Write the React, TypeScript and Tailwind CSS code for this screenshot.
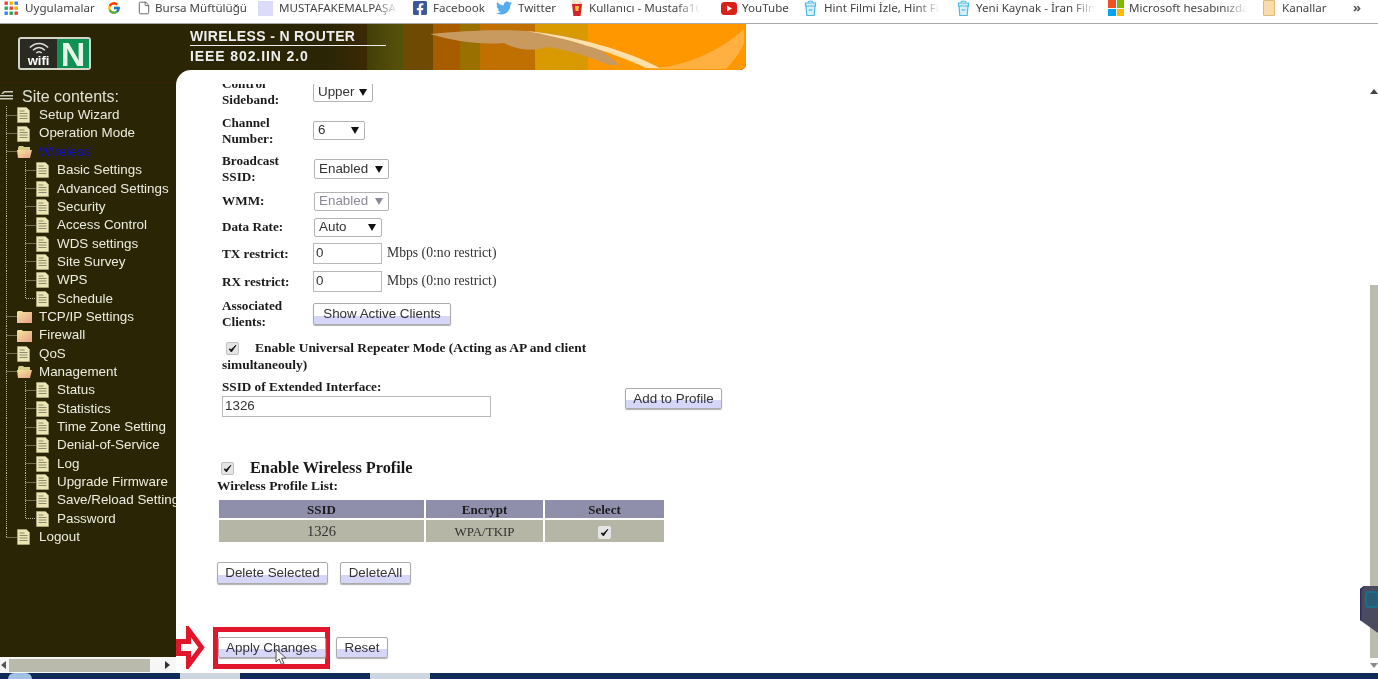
import type { ReactNode } from 'react';
import { FaFacebookSquare, FaTwitter } from 'react-icons/fa';
import { FcGoogle } from 'react-icons/fc';
import { File } from 'lucide-react';

const serif = 'font-["Liberation_Serif",serif]';
const sans = 'font-["Liberation_Sans",sans-serif]';

type Kind = 'page' | 'folder' | 'open';

const tree: { label: string; kind: Kind; level: 0 | 1; last?: boolean; link?: boolean; end?: boolean }[] = [
  { label: 'Setup Wizard', kind: 'page', level: 0 },
  { label: 'Operation Mode', kind: 'page', level: 0 },
  { label: 'Wireless', kind: 'open', level: 0, link: true },
  { label: 'Basic Settings', kind: 'page', level: 1 },
  { label: 'Advanced Settings', kind: 'page', level: 1 },
  { label: 'Security', kind: 'page', level: 1 },
  { label: 'Access Control', kind: 'page', level: 1 },
  { label: 'WDS settings', kind: 'page', level: 1 },
  { label: 'Site Survey', kind: 'page', level: 1 },
  { label: 'WPS', kind: 'page', level: 1 },
  { label: 'Schedule', kind: 'page', level: 1, last: true },
  { label: 'TCP/IP Settings', kind: 'folder', level: 0 },
  { label: 'Firewall', kind: 'folder', level: 0 },
  { label: 'QoS', kind: 'page', level: 0 },
  { label: 'Management', kind: 'open', level: 0 },
  { label: 'Status', kind: 'page', level: 1 },
  { label: 'Statistics', kind: 'page', level: 1 },
  { label: 'Time Zone Setting', kind: 'page', level: 1 },
  { label: 'Denial-of-Service', kind: 'page', level: 1 },
  { label: 'Log', kind: 'page', level: 1 },
  { label: 'Upgrade Firmware', kind: 'page', level: 1 },
  { label: 'Save/Reload Settings', kind: 'page', level: 1 },
  { label: 'Password', kind: 'page', level: 1, last: true },
  { label: 'Logout', kind: 'page', level: 0, end: true },
];

function AppsIcon() {
  const colors = ['#e8453c', '#f4b400', '#3b82f6', '#34a853', '#e8453c', '#f4b400', '#3b82f6', '#34a853', '#e8453c'];
  return (
    <svg width="14" height="14" viewBox="0 0 14 14">
      {colors.map((c, i) => (
        <rect key={i} x={(i % 3) * 5 + 0.5} y={Math.floor(i / 3) * 5 + 0.5} width="3.4" height="3.4" fill={c} />
      ))}
    </svg>
  );
}

function PopcornIcon() {
  return (
    <svg width="14" height="18" viewBox="0 0 14 18">
      <circle cx="4" cy="3.5" r="2.4" fill="#efe3c8" />
      <circle cx="8" cy="2.8" r="2.4" fill="#f3ead6" />
      <circle cx="10.5" cy="5" r="2" fill="#e6d6b4" />
      <path d="M2 5h10l-1.4 12H3.4z" fill="#d5232c" />
      <path d="M5 7h4l-.6 5H5.6z" fill="#f4c430" />
    </svg>
  );
}

function CupIcon() {
  return (
    <svg width="13" height="18" viewBox="0 0 13 18" fill="none" stroke="#4cb8e8" strokeWidth="1.2">
      <path d="M4 3.5C4 1.5 9 1.5 9 3.5" />
      <path d="M1.5 4h10v3h-10zM2 7l.8 9.5h7.4L11 7" fill="#d8f0fb" />
      <path d="M4.5 11h4" />
    </svg>
  );
}

function YoutubeIcon() {
  return (
    <svg width="16" height="13" viewBox="0 0 16 13">
      <rect width="16" height="13" rx="3.5" fill="#d9211a" />
      <path d="M6 3.5v6l5-3z" fill="#ffffff" />
    </svg>
  );
}

function MicrosoftIcon() {
  return (
    <div className="grid h-[16px] w-[16px] grid-cols-2 gap-px">
      <span className="bg-[#f25022]" />
      <span className="bg-[#7fba00]" />
      <span className="bg-[#00a4ef]" />
      <span className="bg-[#ffb900]" />
    </div>
  );
}

function Bookmark({ icon, label, className, fade, gap }: {
  icon: ReactNode; label: string; className: string; fade?: boolean; gap: string;
}) {
  return (
    <div className={`flex shrink-0 items-center ${className}`}>
      <span className="flex shrink-0 items-center justify-center">{icon}</span>
      <span className={`relative min-w-0 flex-1 whitespace-nowrap ${fade ? 'overflow-hidden' : ''} ${gap}`}>
        {label}
        {fade && <span className="absolute inset-y-0 right-0 w-[24px] bg-linear-to-r from-transparent to-white" />}
      </span>
    </div>
  );
}

function BookmarksBar() {
  return (
    <div className='flex h-[24px] shrink-0 items-center border-b border-[#aaaaaa] bg-white pb-[7px] font-["Noto_Sans",sans-serif] text-[11.6px] text-[#444444]'>
      <Bookmark className="ml-[4px] w-[88px]" gap="ml-[7px]" icon={<AppsIcon />} label="Uygulamalar" />
      <div className="ml-[15px] flex w-[14px] shrink-0 items-center"><FcGoogle size={14} /></div>
      <Bookmark className="ml-[16px] w-[108px]" gap="ml-[4px]" icon={<File size={14} strokeWidth={1.5} color="#555" />} label="Bursa Müftülüğü" />
      <Bookmark className="ml-[13px] w-[140px]" gap="ml-[6px]" fade icon={<span className="block h-[15px] w-[15px] bg-[#dcdcfa]" />} label="MUSTAFAKEMALPAŞA" />
      <Bookmark className="ml-[14px] w-[71px]" gap="ml-[5px]" icon={<FaFacebookSquare size={16} color="#3b5998" />} label="Facebook" />
      <Bookmark className="ml-[13px] w-[58px]" gap="ml-[6px]" icon={<FaTwitter size={16} color="#55acee" />} label="Twitter" />
      <Bookmark className="ml-[16px] w-[130px]" gap="ml-[5px]" fade icon={<PopcornIcon />} label="Kullanıcı - Mustafa16 - " />
      <Bookmark className="ml-[21px] w-[69px]" gap="ml-[5px]" icon={<YoutubeIcon />} label="YouTube" />
      <Bookmark className="ml-[14px] w-[136px]" gap="ml-[7px]" fade icon={<CupIcon />} label="Hint Filmi İzle, Hint Film" />
      <Bookmark className="ml-[17px] w-[138px]" gap="ml-[6px]" fade icon={<CupIcon />} label="Yeni Kaynak - İran Film" />
      <Bookmark className="ml-[13px] w-[139px]" gap="ml-[5px]" fade icon={<MicrosoftIcon />} label="Microsoft hesabınızda" />
      <Bookmark className="ml-[16px] w-[64px]" gap="ml-[7px]" icon={<span className="block h-[16px] w-[12px] rounded-[1px] border border-[#e0b878] bg-[#fbdca8]" />} label="Kanallar" />
      <span className="ml-[26px] text-[13px] font-bold text-[#555555]">»</span>
    </div>
  );
}

function WifiLogo() {
  return (
    <div className="ml-[18px] flex h-[33px] w-[73px] overflow-hidden rounded-[3px] border-2 border-[#d4d4c8] bg-[#2b2a22]">
      <div className="flex w-[37px] flex-col items-center justify-end pb-[1px]">
        <svg width="22" height="13" viewBox="0 0 24 14" fill="none" stroke="#dddddd" strokeWidth="1.6">
          <path d="M2 6c6-6 14-6 20 0M5.5 9c4-4 9-4 13 0M9 12c2-2 4-2 6 0" />
        </svg>
        <span className={`${sans} text-[13px] leading-[12px] font-bold text-white`}>wifi</span>
      </div>
      <div className={`${sans} flex flex-1 items-center justify-center bg-[#0c9253] text-[34px] leading-none font-bold text-[#e8f2e6]`}>N</div>
    </div>
  );
}

function PageIcon() {
  return (
    <svg width="13" height="16" viewBox="0 0 13 16" className="shrink-0">
      <path d="M.5.5h9l3 3v12H.5z" fill="#ece5b4" stroke="#b8b48c" strokeWidth=".6" />
      <path d="M2.5 4h5M2.5 6.5h8M2.5 9h8M2.5 11.5h8" stroke="#8c8a70" strokeWidth="1" />
    </svg>
  );
}

function FolderIcon({ open }: { open: boolean }) {
  return (
    <svg width="15" height="13" viewBox="0 0 15 13" className="-mr-[2px] shrink-0">
      <defs>
        <linearGradient id="folder-fill" x1="0" y1="0" x2="1" y2="1">
          <stop offset="0" stopColor="#f6e79a" />
          <stop offset="1" stopColor="#e8a08c" />
        </linearGradient>
      </defs>
      {open ? (
        <>
          <path d="M1 3l1-2h4l1 1h6v3H1z" fill="#d8cf88" />
          <path d="M0 5h15l-2 8H1z" fill="url(#folder-fill)" />
        </>
      ) : (
        <path d="M0 2l1-1h4l1 1h9v11H0z" fill="url(#folder-fill)" />
      )}
    </svg>
  );
}

function TreeGuide({ level, last, end }: { level: 0 | 1; last?: boolean; end?: boolean }) {
  const w = level === 0 ? 17 : 36;
  return (
    <svg width={w} height="19" className="shrink-0" fill="none" stroke="#b9b9a2" strokeDasharray="1 1">
      <path d={end ? 'M6.5 0v9.5' : 'M6.5 0v19'} />
      {level === 0 && <path d="M6.5 9.5H17" />}
      {level === 1 && <path d={last ? 'M25.5 0v9.5H36' : 'M25.5 0v19M25.5 9.5H36'} />}
    </svg>
  );
}

function Sidebar() {
  return (
    <aside className={`${sans} flex w-[176px] shrink-0 flex-col overflow-hidden text-[13.4px] text-[#ecece0]`}>
      <div className="h-[59px] shrink-0 border-b border-[#3a2108] pt-[13px]">
        <WifiLogo />
      </div>
      <div className="flex h-[23px] shrink-0 items-end text-[16px] leading-[18px] text-[#e0e0d4]">
        <svg width="14" height="10" viewBox="0 0 14 10" className="mb-[5px]" fill="#cfcfc4">
          <path d="M1 3L4 0h9v1.6H4.6L3 3zM0 4h13v1.6H0zM0 7h13v1.6H0z" />
        </svg>
        <span className="ml-[8px]">Site contents:</span>
      </div>
      <div className="min-h-0 flex-1">
        {tree.map(t => (
          <div key={t.label} className="flex h-[18.35px] items-center whitespace-nowrap">
            <TreeGuide level={t.level} last={t.last} end={t.end} />
            {t.kind === 'page' ? <PageIcon /> : <FolderIcon open={t.kind === 'open'} />}
            <span className={`${t.level === 0 ? 'ml-[9px]' : 'ml-[8px]'} ${t.link ? 'text-[#1010c8]' : ''}`}>{t.label}</span>
          </div>
        ))}
      </div>
      <div className="flex h-[16px] shrink-0 items-center bg-[#f6f6f4]">
        <span className="ml-[1px] h-0 w-0 border-y-[4px] border-r-[5px] border-y-transparent border-r-[#555555]" />
        <div className="ml-[3px] h-[13px] w-[141px] bg-[#b9b9ac]" />
        <span className="ml-[15px] h-0 w-0 border-y-[4px] border-l-[5px] border-y-transparent border-l-[#333333]" />
      </div>
    </aside>
  );
}

function Banner() {
  return (
    <div className={`${sans} relative h-[46px] w-[570px] shrink-0 overflow-hidden rounded-br-[6px] bg-[#2a2605]`}>
      <svg width="570" height="46" viewBox="0 0 570 46" className="absolute inset-0">
        <defs>
          <linearGradient id="banner-shade" x1="0" y1="0" x2="1" y2="0">
            <stop offset="0" stopColor="#2a2605" />
            <stop offset="1" stopColor="#2a2605" stopOpacity="0" />
          </linearGradient>
        </defs>
        <rect x="151" width="40" height="46" fill="#4a2c05" />
        <rect x="191" width="36" height="46" fill="#55500a" />
        <rect x="227" width="30" height="46" fill="#6e4a02" />
        <rect x="257" width="27" height="46" fill="#a85c00" />
        <rect x="284" width="20" height="46" fill="#9a7000" />
        <rect x="304" width="55" height="46" fill="#c07000" />
        <rect x="359" width="53" height="46" fill="#d89a00" />
        <rect x="412" width="158" height="46" fill="#ff9700" />
        <rect x="151" width="70" height="46" fill="url(#banner-shade)" />
        <path d="M254 10c30-3 66-5 96-3 24 2 44 6 60 10 12 6 22 14 34 24h-12c-18-8-36-14-60-18-14 4-30 4-44-4-26 2-50-2-74-9z" fill="#c89a60" />
        <path d="M350 7c36 6 84 20 120 37h14C450 26 400 12 350 7z" fill="#ffe0a8" />
        <path d="M470 45c40-2 74-18 98-40v14c-4 10-12 20-18 26z" fill="#ffb040" />
      </svg>
      <div className="relative ml-[14px] w-[196px] pt-[4px] text-[14px] font-bold text-[#eeeeee]">
        <div className="h-[17px] leading-[17px] tracking-[0.35px]">WIRELESS - N ROUTER</div>
        <div className="h-px bg-[#eeeeee]" />
        <div className="h-[18px] leading-[20px] tracking-[0.9px]">IEEE 802.IIN 2.0</div>
      </div>
    </div>
  );
}

function Arrow({ disabled }: { disabled?: boolean }) {
  return (
    <svg width="8" height="7" viewBox="0 0 8 7" className="shrink-0">
      <path d="M0 0h8L4 7z" fill={disabled ? '#8a8a96' : '#111111'} />
    </svg>
  );
}

function Select({ value, className, disabled }: { value: string; className: string; disabled?: boolean }) {
  return (
    <div className={`${sans} flex shrink-0 items-center justify-between rounded-[2px] border border-[#b4b4b4] bg-white pr-[5px] pl-[4px] text-[13.4px] ${disabled ? 'text-[#8a8a96]' : 'text-[#333333]'} ${className}`}>
      <span>{value}</span>
      <Arrow disabled={disabled} />
    </div>
  );
}

function Btn({ children, className }: { children: ReactNode; className: string }) {
  return (
    <button className={`${sans} shrink-0 cursor-default rounded-[2px] border border-[#ababab] bg-linear-to-b from-white from-60% to-[#d6d6f8] to-60% text-[13.4px] text-[#333333] shadow-[0_1px_1px_#b0b0b0] ${className}`}>
      {children}
    </button>
  );
}

function Check({ className }: { className: string }) {
  return (
    <span className={`inline-flex h-[13px] w-[13px] shrink-0 items-center justify-center rounded-[2px] border border-[#c0c0c0] bg-[#e4e4e4] ${className}`}>
      <svg width="9" height="9" viewBox="0 0 9 9"><path d="M1 5l2.4 3L8 1.2 3.4 5.4z" fill="#111" stroke="#111" strokeWidth=".8" /></svg>
    </span>
  );
}

function Row({ label, className, children }: { label: ReactNode; className: string; children: ReactNode }) {
  return (
    <div className={`flex items-center ${className}`}>
      <div className={`${serif} ml-[46px] w-[91px] shrink-0 text-[13.2px] leading-[16px] font-bold text-[#1a1a1a]`}>{label}</div>
      {children}
    </div>
  );
}

function TextBox({ value, className }: { value: string; className: string }) {
  return (
    <div className={`${sans} flex items-center border border-[#b9b9b9] bg-white pl-[2px] text-[13.4px] text-[#333333] ${className}`}>{value}</div>
  );
}

function Cursor() {
  return (
    <svg width="14" height="18" viewBox="0 0 14 18" className="absolute top-[16px] left-[57px]">
      <path d="M1 1v13l3.2-3 2.3 5.5 2.4-1-2.3-5.3H11z" fill="#f4f4f4" stroke="#555555" />
    </svg>
  );
}

function RemoteWidget() {
  return (
    <svg width="19" height="47" viewBox="0 0 19 47" className="absolute top-[586px] right-0">
      <path d="M19 0H5L1 3v31l4 3 14 10z" fill="#4b4b60" />
      <path d="M5 0L1 3v31l1.5 1V3.5L6 0z" fill="#2c2c60" />
      <rect x="7" y="6" width="12" height="15" rx="3" fill="#2c5a74" stroke="#16708c" strokeWidth="2" />
    </svg>
  );
}

function FormContent() {
  return (
    <div className="-mt-[11px] w-[600px]">
      <Row label={<>Control<br />Sideband:</>} className="h-[38px]">
        <Select value="Upper" className="h-[19px] w-[60px]" />
      </Row>
      <Row label={<>Channel<br />Number:</>} className="h-[39px]">
        <Select value="6" className="h-[19px] w-[52px]" />
      </Row>
      <Row label={<>Broadcast<br />SSID:</>} className="h-[38px]">
        <Select value="Enabled" className="ml-px h-[20px] w-[75px]" />
      </Row>
      <Row label="WMM:" className="h-[26px]">
        <Select value="Enabled" disabled className="ml-px h-[19px] w-[75px]" />
      </Row>
      <Row label="Data Rate:" className="h-[26px]">
        <Select value="Auto" className="ml-px h-[19px] w-[68px]" />
      </Row>
      <Row label="TX restrict:" className="h-[27px]">
        <TextBox value="0" className="h-[21px] w-[69px]" />
        <span className={`${serif} ml-[5px] text-[13.7px] text-[#333333]`}>Mbps (0:no restrict)</span>
      </Row>
      <Row label="RX restrict:" className="h-[29px]">
        <TextBox value="0" className="h-[21px] w-[69px]" />
        <span className={`${serif} ml-[5px] text-[13.7px] text-[#333333]`}>Mbps (0:no restrict)</span>
      </Row>
      <Row label={<>Associated<br />Clients:</>} className="h-[36px]">
        <Btn className="h-[22px] w-[138px]">Show Active Clients</Btn>
      </Row>

      <div className={`${serif} mt-[7px] ml-[46px] w-[400px] text-[13.45px] leading-[17px] font-bold text-[#1a1a1a]`}>
        <Check className="mr-[16px] ml-[4px] align-[-1px]" />
        Enable Universal Repeater Mode (Acting as AP and client simultaneouly)
      </div>

      <div className="mt-[6px] flex items-start">
        <div className="ml-[46px]">
          <div className={`${serif} h-[17px] text-[13.2px] leading-[16px] font-bold text-[#1a1a1a]`}>SSID of Extended Interface:</div>
          <TextBox value="1326" className="h-[21px] w-[269px]" />
        </div>
        <Btn className="mt-[9px] ml-[134px] h-[21px] w-[97px]">Add to Profile</Btn>
      </div>

      <div className={`${serif} mt-[41px] ml-[45px] flex h-[20px] items-center text-[16.3px] font-bold text-[#1a1a1a]`}>
        <Check className="mr-[16px]" />
        Enable Wireless Profile
      </div>
      <div className={`${serif} ml-[41px] h-[20px] text-[13.45px] leading-[15px] font-bold text-[#1a1a1a]`}>Wireless Profile List:</div>

      <table className={`${serif} ml-[41px] w-[449px] table-fixed border-separate border-spacing-[2px] text-[13px] leading-[15px] text-[#333333]`}>
        <thead>
          <tr className="h-[18px] bg-[#8f8fab] text-[#1c1c1c]">
            <th className="w-[205px] font-bold">SSID</th>
            <th className="w-[117px] font-bold">Encrypt</th>
            <th className="w-[119px] font-bold">Select</th>
          </tr>
        </thead>
        <tbody>
          <tr className="h-[22px] bg-[#b6b6a6] text-center">
            <td className="text-[14.5px]">1326</td>
            <td>WPA/TKIP</td>
            <td><Check className="border-0 bg-[#e4e4e4] align-middle" /></td>
          </tr>
        </tbody>
      </table>

      <div className="mt-[18px] ml-[41px] flex gap-[12px]">
        <Btn className="h-[22px] w-[111px]">Delete Selected</Btn>
        <Btn className="h-[22px] w-[71px]">DeleteAll</Btn>
      </div>

      <div className="mt-[42px] flex items-center">
        <svg width="29" height="43" viewBox="0 0 29 43" className="shrink-0">
          <path d="M2.5 15.5h10V4l13 17.5L12.5 39V27.5h-10z" fill="#ffffff" stroke="#e2162a" strokeWidth="5" />
        </svg>
        <div className="relative ml-[8px] flex h-[42px] w-[117px] items-center justify-center border-[5px] border-[#e2162a]">
          <Btn className="h-[21px] w-[108px]">Apply Changes</Btn>
          <Cursor />
        </div>
        <Btn className="ml-[6px] h-[21px] w-[52px]">Reset</Btn>
      </div>
    </div>
  );
}

function Scrollbar() {
  return (
    <div className="flex w-[8px] shrink-0 flex-col items-center">
      <span className="mt-[5px] h-0 w-0 border-x-[4px] border-b-[5px] border-x-transparent border-b-[#444444]" />
      <div className="mt-[191px] w-full flex-1 bg-[#bcbcae]" />
      <span className="mt-[5px] mb-[5px] h-0 w-0 border-x-[4px] border-t-[5px] border-x-transparent border-t-[#8a8a8a]" />
    </div>
  );
}

function Taskbar() {
  return (
    <div className="flex h-[6px] shrink-0 bg-[#0f2c58]">
      <span className="ml-[8px] h-full w-[24px] rounded-t-full bg-[#9fc0e0]" />
      <span className="ml-[148px] h-full w-[60px] bg-[#cdd6de]" />
      <span className="ml-[130px] h-full w-[60px] bg-[#cdd6de]" />
    </div>
  );
}

export default function App() {
  return (
    <div className="relative flex h-screen flex-col overflow-hidden bg-white blur-[0.4px]">
      <BookmarksBar />
      <div className="flex min-h-0 flex-1 bg-[#2a2605]">
        <Sidebar />
        <div className="flex min-w-0 flex-1 flex-col">
          <div className="flex shrink-0 bg-white">
            <Banner />
          </div>
          <div className="flex min-h-0 flex-1 flex-col rounded-tl-[15px] bg-white">
            <div className="h-[14px] shrink-0" />
            <div className="flex min-h-0 flex-1">
              <div className="min-w-0 flex-1 overflow-hidden">
                <FormContent />
              </div>
              <Scrollbar />
            </div>
          </div>
        </div>
      </div>
      <Taskbar />
      <RemoteWidget />
    </div>
  );
}
